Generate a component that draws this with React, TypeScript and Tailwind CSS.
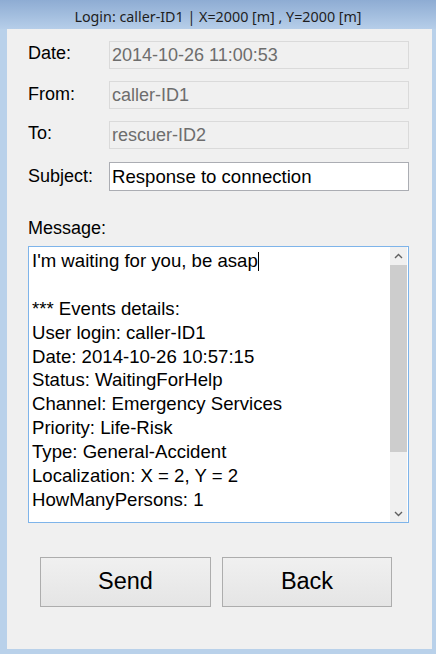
import React from "react";

const Chevron = ({ up }: { up: boolean }) => (
  <svg width="9" height="6" viewBox="0 0 9 6" fill="none">
    <polyline
      points={up ? "1,5 4.5,1.5 8,5" : "1,1 4.5,4.5 8,1"}
      stroke="#606060"
      strokeWidth="1.4"
      fill="none"
    />
  </svg>
);

const ReadOnlyRow = ({ label, value, labelMb }: { label: string; value: string; labelMb: string }) => (
  <div className="flex items-center h-[28px]">
    <div className={`w-[81px] text-[18px] text-black ${labelMb}`}>{label}</div>
    <div className="w-[300px] h-[28px] border border-[#dadada] bg-[#f0f0f0] flex items-center pl-[2px] pt-[1px] text-[18px] text-[#6d6d6d]">
      {value}
    </div>
  </div>
);

export default function App() {
  const lines = [
    "",
    "*** Events details:",
    "User login: caller-ID1",
    "Date: 2014-10-26 10:57:15",
    "Status: WaitingForHelp",
    "Channel: Emergency Services",
    "Priority: Life-Risk",
    "Type: General-Accident",
    "Localization: X = 2, Y = 2",
    "HowManyPersons: 1",
  ];
  return (
    <div
      className="w-[436px] h-[654px] bg-[#b9d1ea] flex flex-col overflow-hidden"
      style={{ fontFamily: '"Liberation Sans", Arial, sans-serif' }}
    >
      <div
        className="h-[29px] shrink-0 bg-gradient-to-b from-[#8eacd3] to-[#b6cee9] flex items-center justify-center pt-[5px] text-[14.3px] text-[#1e1e1e]"
        style={{ fontFamily: '"Noto Sans", "Open Sans", sans-serif' }}
      >
        Login: caller-ID1 | X=2000 [m] , Y=2000 [m]
      </div>
      <div className="flex-1 ml-[7px] mr-[4px] mb-[5px] bg-[#f0f0f0] flex flex-col pt-[12px] pl-[21px]">
        <ReadOnlyRow label="Date:" value="2014-10-26 11:00:53" labelMb="mb-[4px]" />
        <div className="mt-[12px]">
          <ReadOnlyRow label="From:" value="caller-ID1" labelMb="mb-[2px]" />
        </div>
        <div className="mt-[12px]">
          <ReadOnlyRow label="To:" value="rescuer-ID2" labelMb="mb-[4px]" />
        </div>
        <div className="mt-[13px] flex items-center h-[29px]">
          <div className="w-[81px] text-[18px] text-black">Subject:</div>
          <div className="w-[300px] h-[29px] border border-[#abadb3] bg-white flex items-center pl-[2px] text-[18.6px] text-black">
            Response to connection
          </div>
        </div>
        <div className="mt-[27px] h-[20px] leading-[20px] text-[18px] text-black">Message:</div>
        <div className="mt-[8px] w-[381px] h-[277px] border border-[#7eb4ea] bg-white flex">
          <div className="flex-1 overflow-hidden pl-[3px] pt-[2px] text-[18.6px] leading-[23.9px] text-black whitespace-pre">
            <div>
              I'm waiting for you, be asap
              <span className="inline-block w-px h-[19px] bg-black align-[-4px]" />
            </div>
            {lines.map((l, i) => (
              <div key={i} className="h-[23.9px]">
                {l}
              </div>
            ))}
          </div>
          <div className="w-[17px] mr-[1px] bg-[#f0f0f0] flex flex-col">
            <div className="h-[17px] flex items-center justify-center">
              <Chevron up />
            </div>
            <div className="mt-[1px] h-[187px] bg-[#cdcdcd]" />
            <div className="flex-1" />
            <div className="h-[17px] flex items-center justify-center">
              <Chevron up={false} />
            </div>
          </div>
        </div>
        <div className="mt-[34px] ml-[12px] flex gap-[11px]">
          <div className="w-[171px] h-[50px] border border-[#adadad] bg-gradient-to-b from-[#f0f0f0] to-[#e5e5e5] flex items-center justify-center text-[23.5px] text-black">
            Send
          </div>
          <div className="w-[170px] h-[50px] border border-[#adadad] bg-gradient-to-b from-[#f0f0f0] to-[#e5e5e5] flex items-center justify-center text-[23.5px] text-black">
            Back
          </div>
        </div>
      </div>
    </div>
  );
}
